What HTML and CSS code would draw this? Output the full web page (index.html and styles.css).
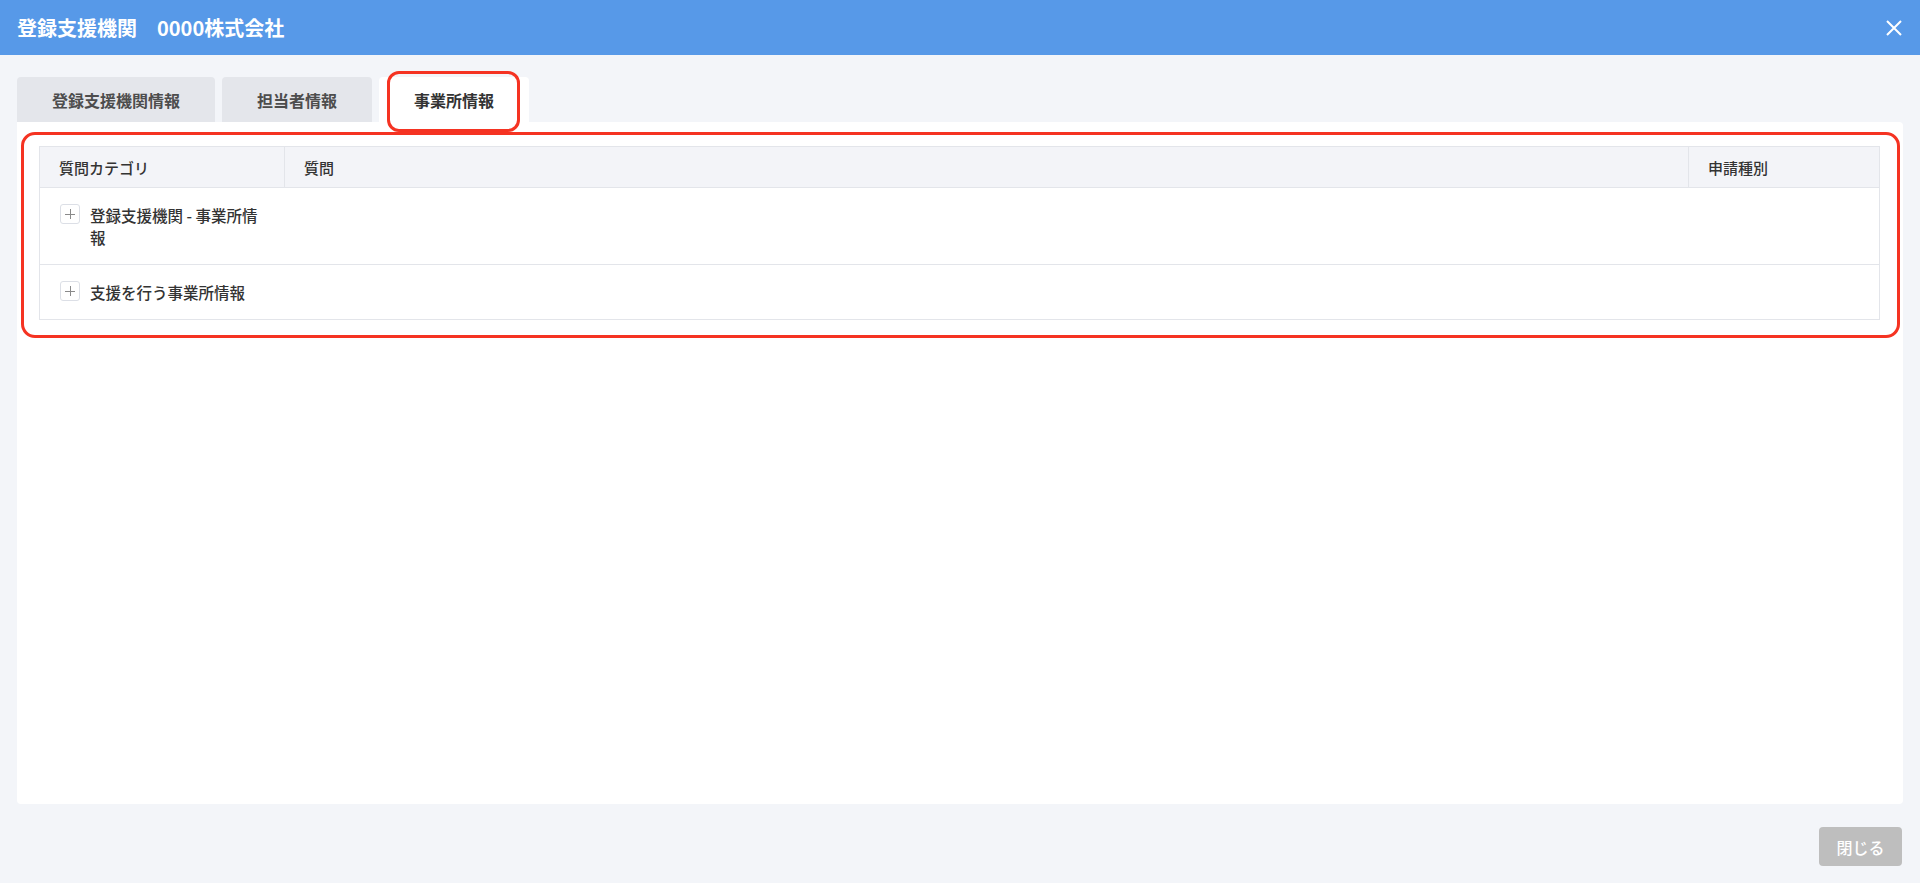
FILE: index.html
```html
<!DOCTYPE html>
<html lang="ja">
<head>
<meta charset="utf-8">
<title>登録支援機関</title>
<link rel="stylesheet" href="styles.css">
</head>
<body>
<header class="topbar">
  <h1 class="title">登録支援機関　0000株式会社</h1>
  <button class="close-x" aria-label="閉じる">
    <svg width="16" height="16" viewBox="0 0 16 16"><path d="M1 1L15 15M15 1L1 15" stroke="#fff" stroke-width="2" fill="none"/></svg>
  </button>
</header>
<main class="main">
  <div class="tabs">
    <div class="tab">登録支援機関情報</div>
    <div class="tab">担当者情報</div>
    <div class="tab tab-active">事業所情報<span class="mark mark-tab"></span></div>
  </div>
  <section class="panel">
    <div class="table-wrap">
      <span class="mark mark-table"></span>
      <table class="qtable">
        <thead>
          <tr>
            <th class="c1">質問カテゴリ</th>
            <th class="c2">質問</th>
            <th class="c3">申請種別</th>
          </tr>
        </thead>
        <tbody>
          <tr>
            <td class="c1"><div class="cat"><span class="plus"></span><span class="cat-text">登録支援機関 - 事業所情報</span></div></td>
            <td class="c2"></td>
            <td class="c3"></td>
          </tr>
          <tr>
            <td class="c1"><div class="cat"><span class="plus"></span><span class="cat-text">支援を行う事業所情報</span></div></td>
            <td class="c2"></td>
            <td class="c3"></td>
          </tr>
        </tbody>
      </table>
    </div>
  </section>
  <footer class="footer">
    <button class="btn-close">閉じる</button>
  </footer>
</main>
</body>
</html>
```

FILE: styles.css
```css
* { box-sizing: border-box; }
html, body {
  margin: 0;
  padding: 0;
  height: 100%;
}
body {
  background: #f3f5f9;
  font-family: "Noto Sans CJK JP", "Noto Sans", sans-serif;
  color: #333;
  overflow: hidden;
}
.topbar {
  height: 55px;
  background: #5799e8;
  display: flex;
  align-items: center;
  justify-content: space-between;
  padding: 0 18px 0 17px;
}
.title {
  margin: 0;
  color: #fff;
  font-size: 20px;
  font-weight: 700;
  line-height: 1;
}
.close-x {
  background: none;
  border: 0;
  padding: 0;
  width: 16px;
  height: 16px;
  display: flex;
}
.main {
  padding: 22px 17px 0 17px;
}
.tabs {
  display: flex;
  gap: 7px;
  height: 45px;
}
.tab {
  position: relative;
  background: #e4e6eb;
  border-radius: 4px 4px 0 0;
  padding: 0 35px;
  font-size: 16px;
  font-weight: 600;
  color: #4d4d4d;
  display: flex;
  align-items: center;
  justify-content: center;
}
.tab-active {
  background: #fff;
  color: #333;
}
.mark {
  position: absolute;
  border: 3px solid #f53322;
  pointer-events: none;
}
.mark-tab {
  left: 8px;
  right: 9px;
  top: -6px;
  bottom: -10px;
  border-radius: 12px;
}
.panel {
  background: #fff;
  height: 682px;
  border-radius: 0 4px 4px 4px;
  padding: 24px 23px 0 22px;
}
.table-wrap {
  position: relative;
}
.mark-table {
  left: -18px;
  right: -20px;
  top: -14px;
  bottom: -18px;
  border-radius: 14px;
}
.qtable {
  width: 100%;
  border-collapse: collapse;
  table-layout: fixed;
  border: 1px solid #e3e5ea;
}
.qtable th {
  background: #f3f4f8;
  height: 41px;
  font-size: 15px;
  font-weight: 500;
  color: #333;
  text-align: left;
  padding: 0 19px;
  border: 1px solid #e3e5ea;
}
.qtable td {
  padding: 16px 20px;
  border-top: 1px solid #e3e5ea;
  border-bottom: 1px solid #e3e5ea;
  vertical-align: top;
  font-size: 15.5px;
  font-weight: 500;
  line-height: 22px;
}
.qtable .c1 { width: 245px; }
.qtable .c3 { width: 191px; }
.cat {
  display: flex;
  gap: 10px;
  align-items: flex-start;
}
.plus {
  flex: none;
  position: relative;
  width: 20px;
  height: 20px;
  border: 1px solid #dcdfe6;
  border-radius: 3px;
  background: #fff;
}
.plus::before,
.plus::after {
  content: "";
  position: absolute;
  background: #8a8a8a;
}
.plus::before {
  left: 4px;
  right: 4px;
  top: 8.5px;
  height: 1px;
}
.plus::after {
  top: 4px;
  bottom: 4px;
  left: 8.5px;
  width: 1px;
}
.cat-text {
  color: #333;
}
.footer {
  display: flex;
  justify-content: flex-end;
  padding-top: 23px;
  padding-right: 1px;
}
.btn-close {
  width: 83px;
  height: 39px;
  background: #bebebe;
  color: #fff;
  border: 0;
  border-radius: 4px;
  font-family: inherit;
  font-size: 16px;
  font-weight: 500;
}
```
